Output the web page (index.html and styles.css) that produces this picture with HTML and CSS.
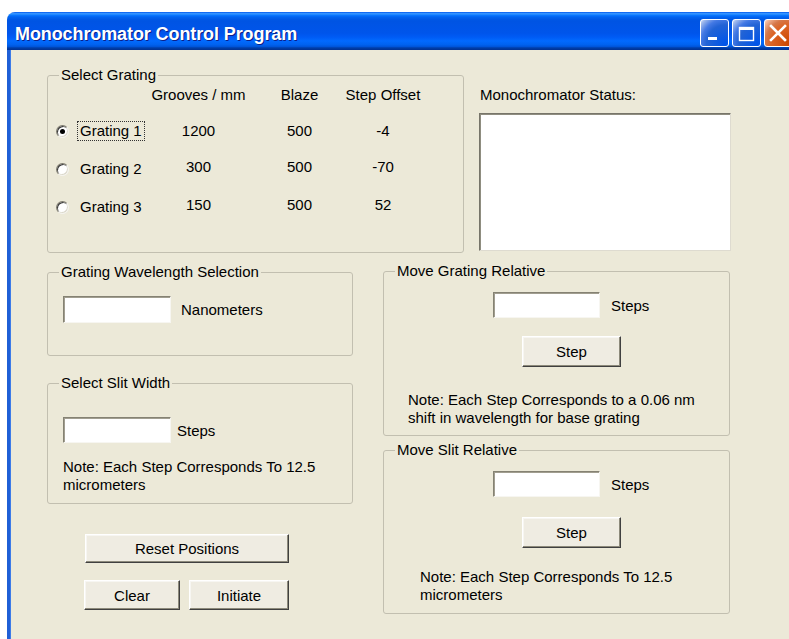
FILE: index.html
```html
<!DOCTYPE html>
<html lang="en">
<head>
<meta charset="utf-8">
<title>Monochromator Control Program</title>
<link rel="stylesheet" href="styles.css">
</head>
<body>
<div class="window">
  <div class="titlebar">
    <span class="title">Monochromator Control Program</span>
    <div class="controls">
      <span class="ctl ctl-blue">
        <svg width="27" height="26" viewBox="0 0 27 26"><rect x="7" y="17" width="9" height="3" fill="#fff"/></svg>
      </span>
      <span class="ctl ctl-blue">
        <svg width="27" height="26" viewBox="0 0 27 26"><rect x="6.5" y="7.5" width="14" height="13" fill="none" stroke="#fff" stroke-width="1.4"/><rect x="6" y="7" width="15" height="3" fill="#fff"/></svg>
      </span>
      <span class="ctl ctl-close">
        <svg width="27" height="26" viewBox="0 0 27 26"><path d="M6 6 L20 20 M20 6 L6 20" stroke="#fff" stroke-width="2.6" stroke-linecap="square"/></svg>
      </span>
    </div>
  </div>

  <div class="client">
    <div class="row-top">
      <fieldset class="group group-grating">
        <legend>Select Grating</legend>
        <div class="grating-table">
          <span></span>
          <span class="hdr">Grooves / mm</span>
          <span class="hdr">Blaze</span>
          <span class="hdr hdr-wide">Step Offset</span>

          <label class="opt"><span class="radio checked"></span><span class="opt-text focused">Grating 1</span></label>
          <span class="num">1200</span>
          <span class="num">500</span>
          <span class="num">-4</span>

          <label class="opt"><span class="radio"></span><span class="opt-text">Grating 2</span></label>
          <span class="num num-up">300</span>
          <span class="num num-up">500</span>
          <span class="num num-up">-70</span>

          <label class="opt"><span class="radio"></span><span class="opt-text">Grating 3</span></label>
          <span class="num num-up">150</span>
          <span class="num num-up">500</span>
          <span class="num num-up">52</span>
        </div>
      </fieldset>

      <div class="status">
        <div class="status-label">Monochromator Status:</div>
        <div class="textbox status-box"></div>
      </div>
    </div>

    <div class="row-main">
      <div class="col-left">
        <fieldset class="group group-wave">
          <legend>Grating Wavelength Selection</legend>
          <div class="inner inner-wave">
            <div class="field-row gap-10">
              <input type="text" class="textbox tb-left">
              <span>Nanometers</span>
            </div>
          </div>
        </fieldset>

        <fieldset class="group group-slit">
          <legend>Select Slit Width</legend>
          <div class="inner inner-slit">
            <div class="field-row gap-6">
              <input type="text" class="textbox tb-left tb-short">
              <span>Steps</span>
            </div>
            <p class="note note-slit">Note: Each Step Corresponds To 12.5<br>micrometers</p>
          </div>
        </fieldset>

        <div class="actions">
          <button class="btn btn-reset">Reset Positions</button>
          <div class="action-row">
            <button class="btn btn-clear">Clear</button>
            <button class="btn btn-init">Initiate</button>
          </div>
        </div>
      </div>

      <div class="col-right">
        <fieldset class="group group-move-grating">
          <legend>Move Grating Relative</legend>
          <div class="inner inner-move">
            <div class="field-row gap-11 move-row">
              <input type="text" class="textbox tb-right">
              <span>Steps</span>
            </div>
            <button class="btn btn-step step-grating">Step</button>
            <p class="note note-grating">Note: Each Step Corresponds to a 0.06 nm<br>shift in wavelength for base grating</p>
          </div>
        </fieldset>

        <fieldset class="group group-move-slit">
          <legend>Move Slit Relative</legend>
          <div class="inner inner-move">
            <div class="field-row gap-11 move-row">
              <input type="text" class="textbox tb-right">
              <span>Steps</span>
            </div>
            <button class="btn btn-step step-slit">Step</button>
            <p class="note note-slit-rel">Note: Each Step Corresponds To 12.5<br>micrometers</p>
          </div>
        </fieldset>
      </div>
    </div>
  </div>
</div>
</body>
</html>
```
FILE: styles.css
```css
html, body {
  margin: 0;
  padding: 0;
  background: #fff;
  overflow: hidden;
  height: 639px;
}

body {
  font-family: "Liberation Sans", Arial, sans-serif;
  font-size: 15px;
  color: #000;
}

/* ---------- window frame ---------- */
.window {
  margin: 12px 0 0 7px;
  width: 792px;
  background: #ece9d8;
  border-radius: 8px 8px 0 0;
  overflow: hidden;
}

.titlebar {
  height: 38px;
  display: flex;
  align-items: center;
  padding-left: 8px;
  background: linear-gradient(to bottom,
    #0058ee 0%, #3593ff 4%, #288eff 6%, #127dff 8%, #036ffc 10%,
    #0262ee 14%, #0057e5 20%, #0054e3 24%, #0055eb 56%, #005bf5 66%,
    #026afe 76%, #0062ef 86%, #0052d6 92%, #0040ab 94%, #003092 100%);
}

.title {
  color: #fff;
  font-weight: bold;
  font-size: 18px;
  padding-top: 6px;
  letter-spacing: -0.1px;
  text-shadow: 1px 1px 0 #0c1f8a;
}

.controls {
  margin-left: auto;
  align-self: flex-start;
  margin-top: 7px;
  padding-right: 6px;
  display: flex;
  gap: 3px;
}

.ctl {
  width: 29px;
  height: 28px;
  box-sizing: border-box;
  border: 1px solid #fff;
  border-radius: 3px;
  display: flex;
}

.ctl-blue {
  background: radial-gradient(circle at 90% 90%, #0054e9 0%, #2263d5 55%, #4479e4 72%, #a3bbec 92%, #d8e4fa 100%);
}

.ctl-close {
  background: radial-gradient(circle at 90% 90%, #cc4600 0%, #dc6527 55%, #d5784a 72%, #f3b89b 92%, #ffd9c8 100%);
}

.client {
  border-left: 3px solid #1f5fd6;
  box-shadow: inset 1px 0 0 #3d7be8;
  padding: 17px 0 0 37px;
  height: 600px;
  box-sizing: border-box;
}

/* ---------- group boxes ---------- */
.group {
  margin: 0;
  padding: 0;
  min-width: 0;
  box-sizing: border-box;
  border: 1px solid #c2bfb0;
  border-radius: 3px;
}

.group legend {
  margin-left: 11px;
  padding: 0 2px;
  line-height: 16px;
  font-size: 15px;
}

.row-top {
  display: flex;
  gap: 15px;
}

.group-grating {
  width: 417px;
}

.grating-table {
  height: 169px;
  box-sizing: border-box;
  padding: 4px 0 0 8px;
  display: grid;
  grid-template-columns: 94px 97px 105px 62px;
  grid-template-rows: 25px 38px 38px 38px;
  line-height: 16px;
}

.hdr {
  text-align: center;
  align-self: start;
  white-space: nowrap;
}

.hdr-wide {
  margin: 0 -14px;
}

.num {
  text-align: center;
  align-self: center;
}

.num-up {
  margin-bottom: 5px;
}

.opt {
  display: flex;
  align-items: center;
  align-self: center;
  white-space: nowrap;
}

/* classic sunken option button */
.radio {
  width: 13px;
  height: 13px;
  margin-right: 8px;
  box-sizing: border-box;
  border-radius: 50%;
  background: #fff;
  border: 1px solid;
  border-color: #7d7a6d #f4f3ee #f4f3ee #7d7a6d;
  box-shadow: inset 1px 1px 0 #3a3a3a, inset -1px -1px 0 #dcd9cc;
  display: flex;
  align-items: center;
  justify-content: center;
}

.radio.checked::after {
  content: "";
  width: 5px;
  height: 5px;
  border-radius: 50%;
  background: #000;
}

.opt-text {
  padding: 1px 2px;
  border: 1px solid transparent;
}

.opt-text.focused {
  border: 1px dotted #333;
}

/* ---------- status ---------- */
.status {
  width: 252px;
  padding-top: 20px;
}

.status-label {
  line-height: 16px;
  padding-left: 1px;
}

.textbox {
  display: block;
  margin: 0;
  padding: 0;
  box-sizing: border-box;
  background: #fff;
  border: 1px solid;
  border-color: #858273 #f7f6f1 #f7f6f1 #858273;
  box-shadow: inset 1px 1px 0 #a19e90;
  font: inherit;
  outline: none;
}

.status-box {
  margin-top: 10px;
  height: 138px;
  width: 252px;
  border-color: #77756a #dedbd0 #dedbd0 #77756a;
  box-shadow: inset 1px 1px 0 #8f8d80;
}

/* ---------- lower area ---------- */
.row-main {
  margin-top: 10px;
  display: flex;
  gap: 30px;
}

.col-left {
  width: 306px;
  padding-top: 1px;
}

.col-right {
  width: 347px;
}

.inner-wave {
  height: 75px;
  box-sizing: border-box;
  padding: 16px 0 0 15px;
}

.group-slit {
  margin-top: 19px;
}

.inner-slit {
  height: 112px;
  box-sizing: border-box;
  padding: 26px 0 0 15px;
}

.field-row {
  display: flex;
  align-items: center;
}

.gap-10 { gap: 10px; }
.gap-6 { gap: 6px; }
.gap-11 { gap: 11px; }

.tb-left {
  width: 108px;
  height: 27px;
}

.tb-short {
  height: 26px;
}

.tb-right {
  width: 107px;
  height: 26px;
}

.note {
  margin: 0;
  line-height: 18px;
}

.note-slit {
  margin-top: 15px;
}

.group-move-slit {
  margin-top: 6px;
}

.inner-move {
  box-sizing: border-box;
  padding-top: 13px;
  display: flex;
  flex-direction: column;
  align-items: flex-start;
}

.group-move-grating .inner-move {
  height: 156px;
}

.group-move-slit .inner-move {
  height: 155px;
}

.move-row {
  margin-left: 109px;
}

.btn {
  margin: 0;
  padding: 0;
  font: inherit;
  color: #000;
  background: #efece2;
  box-sizing: border-box;
  border: 1px solid;
  border-color: #fff #404040 #404040 #fff;
  box-shadow: inset -1px -1px 0 #8d8a7b, inset 1px 1px 0 #f7f6f2;
  border-radius: 0;
}

.btn-step {
  width: 99px;
  height: 31px;
  margin-left: 138px;
}

.step-grating {
  margin-top: 18px;
}

.step-slit {
  margin-top: 20px;
}

.note-grating {
  margin-top: 24px;
  margin-left: 24px;
}

.note-slit-rel {
  margin-top: 20px;
  margin-left: 36px;
}

.actions {
  margin-top: 30px;
  padding-left: 38px;
}

.btn-reset {
  display: block;
  width: 204px;
  height: 29px;
}

.action-row {
  margin-top: 17px;
  margin-left: -1px;
  display: flex;
  gap: 9px;
}

.btn-clear {
  width: 96px;
  height: 30px;
}

.btn-init {
  width: 100px;
  height: 30px;
}
```
